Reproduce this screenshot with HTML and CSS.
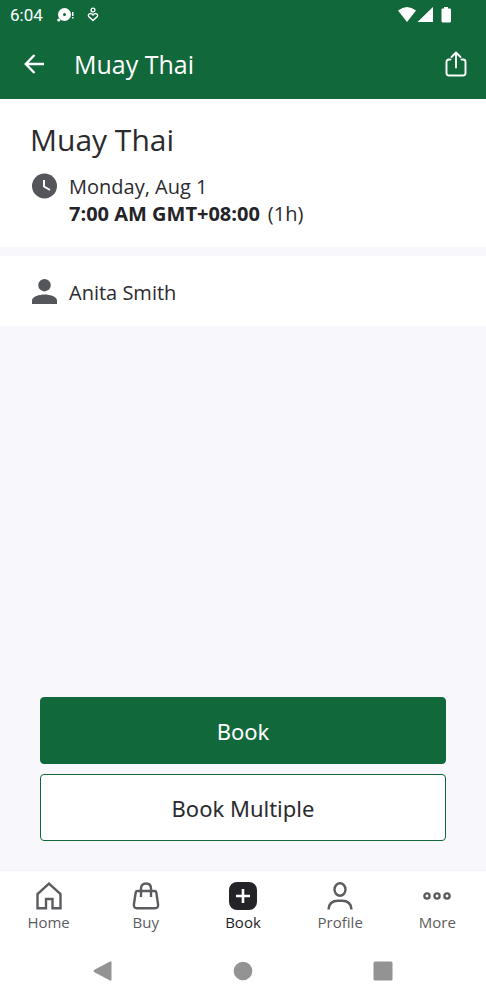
FILE: index.html
```html
<!DOCTYPE html>
<html lang="en">
<head>
<meta charset="utf-8">
<meta name="viewport" content="width=device-width, initial-scale=1">
<title>Muay Thai</title>
<link rel="stylesheet" href="styles.css">
</head>
<body>
<div class="app">
  <header class="top">
    <div class="status">
      <span class="clock">6:04</span>
      <svg class="note" width="18" height="16" viewBox="0 0 18 16" fill="#fff" aria-hidden="true">
        <path fill-rule="evenodd" d="M7.500 1a6.500 6.500 0 1 1 0 13 6.500 6.500 0 0 1 0-13zm0 5a1.500 1.500 0 1 0 0 3 1.500 1.500 0 0 0 0-3z"/>
        <circle cx="1.800" cy="13" r="1.600"/>
        <path d="M15 5h1.500v4H15zM15 10h1.500v1.500H15z"/>
      </svg>
      <svg class="care" width="12" height="16" viewBox="0 0 12 16" fill="none" stroke="#fff" stroke-width="1.400" aria-hidden="true">
        <circle cx="6" cy="3" r="1.900"/>
        <path d="M6 13.500 1.700 9.600C.3 7.300 3.500 5 6 8c2.500-3 5.700-.7 4.300 1.600z"/>
      </svg>
      <span class="signals">
        <svg width="56" height="18" viewBox="0 0 56 18" fill="#fff" aria-hidden="true">
          <path d="M0 4.500Q9-2.500 18 4.500L9 16z"/>
          <path d="M35 1v15H19.500z"/>
          <path d="M46 1h4v1.500h2q1 0 1 1V15q0 1.500-1.500 1.500h-6.500Q43.500 16.500 43.500 15V3.500q0-1 1-1H46z"/>
        </svg>
      </span>
    </div>
    <div class="bar">
      <button class="icon-button" type="button" aria-label="Back">
        <svg width="20" height="20" viewBox="0 0 20 20" fill="none" stroke="#fff" stroke-width="2.400"><path d="M20 10H1.800M10.500 1 1.800 10l8.700 9"/></svg>
      </button>
      <span class="bar-title">Muay Thai</span>
      <button class="icon-button" type="button" aria-label="Share">
        <svg width="22" height="26" viewBox="0 0 22 26" fill="none" stroke="#fff" stroke-width="1.900" stroke-linecap="round" stroke-linejoin="round"><path d="M5.500 8.500H4Q1.500 8.500 1.500 11V22q0 2.500 2.500 2.500h14q2.500 0 2.500-2.500V11q0-2.500-2.500-2.500h-1.500M11 16.500V1.500M6.500 6 11 1.500 15.500 6"/></svg>
      </button>
    </div>
  </header>

  <main class="content">
    <section class="card when">
      <h1>Muay Thai</h1>
      <div class="row">
        <svg width="26" height="26" viewBox="0 0 26 26" aria-hidden="true"><circle cx="13.500" cy="13" r="12.500" fill="#54565b"/><path d="M13 7v6.500l6 3.500" fill="none" stroke="#fff" stroke-width="2"/></svg>
        <p>Monday, Aug 1<br><strong>7:00 AM GMT+08:00</strong><span class="length">(1h)</span></p>
      </div>
    </section>
    <section class="card who">
      <div class="row">
        <svg width="26" height="26" viewBox="0 0 26 26" fill="#54565b" aria-hidden="true"><circle cx="13.500" cy="6.200" r="6.200"/><path d="M1 25V21.500C1 17.500 8.500 15.500 13.500 15.500S26 17.500 26 21.500V25z"/></svg>
        <p>Anita Smith</p>
      </div>
    </section>
    <div class="actions">
      <button class="action primary" type="button">Book</button>
      <button class="action" type="button">Book Multiple</button>
    </div>
  </main>

  <nav class="tabs">
    <a class="tab" href="#home">
      <svg width="28" height="28" viewBox="0 0 28 28" fill="none" stroke="currentColor" stroke-width="2.400"><path d="M2.500 26.300V12L14 1.700 25.500 12v14.300h-8V17h-6.500v9.300z"/></svg>
      Home</a>
    <a class="tab" href="#buy">
      <svg width="28" height="28" viewBox="0 0 28 28" fill="none" stroke="currentColor" stroke-width="2.400" stroke-linejoin="round"><path d="M5.500 9h17q1.500 0 1.800 1.500l1.800 12Q26.500 26.300 23 26.300H5q-3.500 0-3.100-3.800l1.800-12Q4 9 5.500 9zM9 15V6.500Q9 1.500 14 1.500t5 5V15"/></svg>
      Buy</a>
    <a class="tab current" href="#book" aria-current="page">
      <svg width="28" height="28" viewBox="0 0 28 28"><rect width="28" height="28" rx="8" fill="#242428"/><path d="M14 7v14M7 14h14" stroke="#fff" stroke-width="2.600"/></svg>
      Book</a>
    <a class="tab" href="#profile">
      <svg width="28" height="28" viewBox="0 0 28 28" fill="none" stroke="currentColor" stroke-width="2.400"><ellipse cx="14" cy="7.500" rx="5.500" ry="6.200"/><path d="M2.500 27.500Q3 18.800 12 18.800h4q9 0 9.500 8.700"/></svg>
      Profile</a>
    <a class="tab" href="#more">
      <svg width="28" height="28" viewBox="0 0 28 28" fill="none" stroke="currentColor" stroke-width="2.400"><circle cx="4" cy="14" r="2.600"/><circle cx="14" cy="14" r="2.600"/><circle cx="24" cy="14" r="2.600"/></svg>
      More</a>
  </nav>

  <div class="system">
    <button type="button" aria-label="System back"><svg width="20" height="20" viewBox="0 0 20 20" fill="#939393"><path d="M1 9 17 .500Q18.500 0 18.500 1.500v17Q18.500 20 17 19.500L1 11Q0 10 1 9z"/></svg></button>
    <button type="button" aria-label="System home"><svg width="20" height="20" viewBox="0 0 20 20" fill="#939393"><circle cx="10" cy="10" r="9.300"/></svg></button>
    <button type="button" aria-label="Recent apps"><svg width="20" height="20" viewBox="0 0 20 20" fill="#939393"><rect x=".5" y=".5" width="19" height="19" rx="1.500"/></svg></button>
  </div>
</div>
</body>
</html>
```
FILE: styles.css
```css
* { box-sizing: border-box; }
body {
  margin: 0;
  font-family: "Open Sans", "Noto Sans", sans-serif;
  color: #2b2b2f;
  background: #f8f8fc;
}
button {
  font: inherit;
  color: inherit;
  border: 0;
  padding: 0;
  background: none;
  cursor: pointer;
}
svg { display: block; flex: none; }
h1, p { margin: 0; }

.app { min-height: 100vh; display: flex; flex-direction: column; }

.top { background: #11693b; color: #fff; }
.status { height: 30px; display: flex; align-items: center; padding: 0 32px 0 10px; }
.clock { font: 17px/30px Roboto, sans-serif; }
.note { margin-left: 14px; }
.care { margin-left: 12px; }
.signals { margin-left: auto; }
.bar { height: 69px; display: flex; align-items: center; padding: 0 19px 2px 24px; }
.bar-title { flex: 1; margin-left: 30px; font-size: 25px; line-height: 34px; }
.icon-button { display: grid; place-items: center; }

.content { flex: 1; display: flex; flex-direction: column; }
.card { background: #fff; padding: 0 31px; }
.when { padding-top: 21px; padding-bottom: 20px; margin-bottom: 9px; }
.who { padding-top: 23px; padding-bottom: 20px; }
h1 { font-size: 30px; line-height: 40px; font-weight: 400; margin: 0 0 13px -1px; }
.row { display: flex; gap: 12px; font-size: 20px; line-height: 27px; }
strong { font-weight: 700; color: #242428; }
.length { margin-left: 8px; }

.actions { margin-top: auto; padding: 24px 40px 29px; display: grid; gap: 10px; }
.action {
  height: 67px;
  border: 1px solid #11693b;
  border-radius: 4px;
  background: #fff;
  font-family: "Noto Sans", "Open Sans", sans-serif;
  font-size: 22px;
}
.primary { background: #11693b; color: #fff; }

.tabs {
  display: grid;
  grid-template-columns: repeat(5, 1fr);
  background: #fff;
  border-top: 1px solid #f2f2f6;
}
.tab {
  display: flex;
  flex-direction: column;
  align-items: center;
  gap: 2px;
  padding: 11px 0 8px;
  font-size: 15px;
  line-height: 21px;
  color: #5c5c60;
  text-decoration: none;
}
.current { color: #242428; }

.system {
  display: grid;
  grid-template-columns: repeat(3, 140px);
  justify-content: center;
  background: #fff;
  height: 59px;
}
.system button { display: grid; place-items: center; }
```
